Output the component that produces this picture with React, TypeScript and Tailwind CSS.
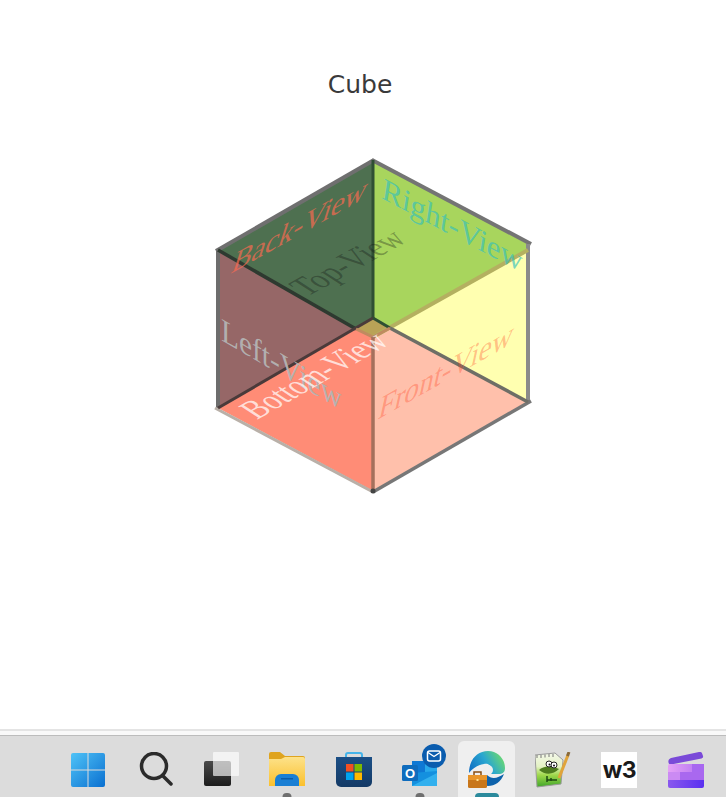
const faces = [
  { points: '373,160 528,244 528,250 390,328 373,318', fill: '#a8d55d' },
  { points: '373,160 218,250 356,329 373,318', fill: '#4e7050' },
  { points: '218,250 218,408 356,329', fill: '#966767' },
  { points: '528,250 528,402 390,328', fill: '#ffffb0' },
  { points: '218,408 373,491 373,337 356,329', fill: '#ff8c76' },
  { points: '528,402 373,491 373,337 390,328', fill: '#ffc0ab' },
  { points: '373,318 356,329 373,337 390,328', fill: '#b9a257' },
];

// each edge has its own tone in the picture because the faces blend under it
const edges = [
  { d: 'M374 160L216 251', stroke: '#6f6f6f', width: 4 },
  { d: 'M372 160L531 244', stroke: '#747474', width: 4 },
  { d: 'M218 250V408', stroke: '#6d6d6d', width: 4 },
  { d: 'M528 244V402', stroke: '#8a8a8a', width: 4 },
  { d: 'M215 408L373 492', stroke: '#b9b0a8', width: 3 },
  { d: 'M531 401L373 492', stroke: '#777', width: 3.5 },
  { d: 'M528 250L373 337', stroke: '#b4b060', width: 4 },
  { d: 'M373 160V318', stroke: '#2f4f33', width: 3 },
  { d: 'M218 250L356 329', stroke: '#2e3a30', width: 3.5 },
  { d: 'M218 408L373 318', stroke: '#4a3a3a', width: 3 },
  { d: 'M373 318L390 328', stroke: '#2f4f33', width: 3 },
  { d: 'M390 328L528 402', stroke: '#6e6e66', width: 3.5 },
  { d: 'M356 329L373 337L390 328', stroke: '#c08a60', width: 3 },
  { d: 'M373 337V491', stroke: '#a5705c', width: 3.5 },
];

const labels = [
  { text: 'Back-View', matrix: 'matrix(0.99 -0.56 -0.35 1.1 230 274)', fill: '#ff6a50', opacity: 0.7 },
  { text: 'Right-View', matrix: 'matrix(1 0.53 -0.15 1 381 198)', fill: '#30c0c0', opacity: 0.65 },
  { text: 'Top-View', matrix: 'matrix(0.85 -0.47 1 0.65 307 297)', fill: '#111', opacity: 0.33 },
  { text: 'Left-View', matrix: 'matrix(0.98 0.57 0 1.1 221 340)', fill: '#b4b4b4', opacity: 0.95 },
  { text: 'Bottom-View', matrix: 'matrix(0.82 -0.47 1 0.65 257 420)', fill: '#ffffff', opacity: 0.72 },
  { text: 'Front-View', matrix: 'matrix(0.97 -0.55 -0.25 1.15 377 420)', fill: '#ff4020', opacity: 0.33 },
];

function Cube() {
  return (
    <svg viewBox="213 155 325 345" width="325" height="345" className="block ml-[213px] mt-[55px]">
      {faces.map((f) => (
        <polygon key={f.points} points={f.points} fill={f.fill} />
      ))}
      {edges.map((e) => (
        <path key={e.d} d={e.d} fill="none" stroke={e.stroke} strokeWidth={e.width} />
      ))}
      {labels.map((l) => (
        <text key={l.text} transform={l.matrix} fill={l.fill} fillOpacity={l.opacity} fontFamily="'Liberation Serif', serif" fontSize="30">
          {l.text}
        </text>
      ))}
      <circle cx="373" cy="491" r="2.5" fill="#444" />
    </svg>
  );
}

function WinIcon() {
  return (
    <svg viewBox="0 0 36 36" className="w-9 h-9">
      <defs>
        <linearGradient id="win" x1="0" y1="0" x2="1" y2="1">
          <stop offset="0" stopColor="#4fc3f7" />
          <stop offset="1" stopColor="#0a6fd0" />
        </linearGradient>
      </defs>
      <path d="M3 1H17.5V17.5H1V3a2 2 0 0 1 2-2ZM18.5 1H33a2 2 0 0 1 2 2V17.5H18.5ZM1 18.5H17.5V35H3a2 2 0 0 1-2-2ZM18.5 18.5H35V33a2 2 0 0 1-2 2H18.5Z" fill="url(#win)" />
    </svg>
  );
}

function SearchIcon() {
  return (
    <svg viewBox="0 0 36 36" className="w-9 h-9">
      <circle cx="17" cy="14" r="12.5" fill="none" stroke="#2b2b2b" strokeWidth="3.5" />
      <path d="M26 24L34 32" stroke="#2b2b2b" strokeWidth="3.5" strokeLinecap="round" />
    </svg>
  );
}

function TaskViewIcon() {
  return (
    <svg viewBox="0 0 36 36" className="w-9 h-9">
      <defs>
        <linearGradient id="tv" x1="0" y1="0" x2="0" y2="1">
          <stop offset="0" stopColor="#4a4a4a" />
          <stop offset="1" stopColor="#1c1c1c" />
        </linearGradient>
      </defs>
      <rect x="1" y="9" width="27" height="25" rx="2" fill="url(#tv)" />
      <rect x="10" y="0" width="26" height="24" rx="1" fill="#fff" fillOpacity="0.65" />
    </svg>
  );
}

function FolderIcon() {
  return (
    <svg viewBox="0 0 36 36" className="w-9 h-9">
      <defs>
        <linearGradient id="fold" x1="0" y1="0" x2="0" y2="1">
          <stop offset="0" stopColor="#fde28a" />
          <stop offset="1" stopColor="#fbc02d" />
        </linearGradient>
      </defs>
      <path d="M0 2a2 2 0 0 1 2-2H11L16 4H34a2 2 0 0 1 2 2V10H0Z" fill="#dfa41f" />
      <path d="M0 7H12L16 5H34a2 2 0 0 1 2 2V34H0Z" fill="url(#fold)" />
      <path d="M6 34V28a6 6 0 0 1 6-6H24a6 6 0 0 1 6 6V34Z" fill="#1a7fd4" />
      <rect x="12" y="26" width="12" height="1.5" fill="#0b5ca8" />
    </svg>
  );
}

function StoreIcon() {
  return (
    <svg viewBox="0 0 36 36" className="w-9 h-9">
      <defs>
        <linearGradient id="store" x1="0" y1="0" x2="0" y2="1">
          <stop offset="0" stopColor="#1b4f86" />
          <stop offset="1" stopColor="#143a66" />
        </linearGradient>
      </defs>
      <path d="M10 6V3a2 2 0 0 1 2-2H24a2 2 0 0 1 2 2V6" fill="none" stroke="#45b4ea" strokeWidth="2" />
      <path d="M0 5H36V30a5 5 0 0 1-5 5H5a5 5 0 0 1-5-5Z" fill="url(#store)" />
      <rect x="10" y="12" width="7.5" height="7.5" fill="#f25022" />
      <rect x="18.5" y="12" width="7.5" height="7.5" fill="#7fba00" />
      <rect x="10" y="20.5" width="7.5" height="7.5" fill="#00a4ef" />
      <rect x="18.5" y="20.5" width="7.5" height="7.5" fill="#ffb900" />
    </svg>
  );
}

function OutlookIcon() {
  return (
    <svg viewBox="0 0 36 36" className="w-9 h-9 overflow-visible">
      <rect x="10" y="9" width="25" height="25" rx="1" fill="#28a8ea" />
      <rect x="10" y="9" width="13" height="12" fill="#0f78d4" />
      <path d="M10 21L35 19V34H10Z" fill="#1490df" />
      <path d="M10 34L35 21V34Z" fill="#32b0ee" />
      <rect x="0" y="13" width="16" height="16" rx="1.5" fill="#0f6cbd" />
      <text x="8" y="26" textAnchor="middle" fontFamily="'Liberation Sans', sans-serif" fontWeight="700" fontSize="13" fill="#fff">O</text>
      <circle cx="32" cy="4" r="12" fill="#0a5cae" />
      <rect x="25.5" y="-1" width="13" height="10" rx="2" fill="none" stroke="#fff" strokeWidth="1.5" />
      <path d="M26 0.5L32 4.5L38 0.5" fill="none" stroke="#fff" strokeWidth="1.4" />
    </svg>
  );
}

function EdgeIcon() {
  return (
    <svg viewBox="0 0 38 38" className="w-[38px] h-[38px] -mt-px">
      <defs>
        <linearGradient id="edge" x1="0" y1="0.7" x2="1" y2="0.3">
          <stop offset="0" stopColor="#1171c4" />
          <stop offset="0.5" stopColor="#2aa7d0" />
          <stop offset="1" stopColor="#6fdc6a" />
        </linearGradient>
      </defs>
      <path d="M1 22C1 9 9 0 20 0C30 0 37 8 37 17C37 21 35 23 30 23H22C25 14 20 12 16 13C9 14 4 18 1 22Z" fill="url(#edge)" />
      <circle cx="20" cy="19" r="5" fill="#eeeeee" />
      <path d="M19 24C24 29 30 27 36 23C33 31 27 35 20 35C17 35 16 31 19 24Z" fill="#0d62ab" />
      <rect x="0" y="24" width="19" height="13" rx="1.5" fill="#c8761a" />
      <rect x="0" y="24" width="19" height="5" fill="#e8952a" />
      <path d="M6 24V21H13V24" fill="none" stroke="#8a4f12" strokeWidth="1.5" />
      <rect x="8.5" y="28" width="2" height="2" fill="#ffe08a" />
    </svg>
  );
}

function NotepadIcon() {
  return (
    <svg viewBox="0 0 36 36" className="w-9 h-9">
      <defs>
        <linearGradient id="np" x1="0" y1="0" x2="0" y2="1">
          <stop offset="0" stopColor="#f4f8ea" />
          <stop offset="0.4" stopColor="#e4f2c4" />
          <stop offset="0.65" stopColor="#9fd84a" />
          <stop offset="1" stopColor="#3fa52a" />
        </linearGradient>
      </defs>
      <path d="M0 3L20 1L28 8L26 32L2 35Z" fill="url(#np)" stroke="#9a9a9a" strokeWidth="1" />
      <path d="M2 3V6M6 3V6M10 2.5V5.5M14 2V5M18 2V5" stroke="#777" strokeWidth="1" />
      <path d="M4 18C8 14 16 13 24 17C18 23 10 23 4 18Z" fill="#4e7d1e" />
      <circle cx="14" cy="12" r="3" fill="#fff" stroke="#222" strokeWidth="1" />
      <circle cx="19" cy="13" r="3" fill="#fff" stroke="#222" strokeWidth="1" />
      <circle cx="14.5" cy="12.5" r="1" fill="#111" />
      <circle cx="19" cy="13.5" r="1" fill="#111" />
      <path d="M12 24V30M12 28H22M16 26V29" stroke="#1d4a12" strokeWidth="1.5" fill="none" />
      <path d="M24 26L33 3" stroke="#e0a43a" strokeWidth="3" />
      <path d="M32.5 4L34 0" stroke="#8a6a3a" strokeWidth="3" />
    </svg>
  );
}

function ClapperIcon() {
  return (
    <svg viewBox="0 0 36 36" className="w-9 h-9">
      <defs>
        <linearGradient id="clapt" x1="0" y1="0" x2="1" y2="0">
          <stop offset="0" stopColor="#e6a2f6" />
          <stop offset="1" stopColor="#b06ff2" />
        </linearGradient>
        <linearGradient id="clapb" x1="0" y1="0" x2="1" y2="0">
          <stop offset="0" stopColor="#8a58ee" />
          <stop offset="1" stopColor="#5a30f0" />
        </linearGradient>
      </defs>
      <path d="M3 6L31 0a3 3 0 0 1 3.5 2.5L35 4a2 2 0 0 1-1.5 2.5L3 12.5C0 13 -1 7.5 3 6Z" fill="#7a4ad8" />
      <path d="M0 14a2 2 0 0 1 2-2H34a2 2 0 0 1 2 2V20H0Z" fill="url(#clapt)" />
      <rect x="24" y="12" width="12" height="8" fill="#a868f0" />
      <rect x="0" y="20" width="36" height="8" fill="#cb8af3" />
      <rect x="12" y="20" width="24" height="8" fill="#a968ef" />
      <path d="M0 28H36V34a2 2 0 0 1-2 2H2a2 2 0 0 1-2-2Z" fill="url(#clapb)" />
    </svg>
  );
}

const items = [
  { id: 'win', icon: <WinIcon /> },
  { id: 'search', icon: <SearchIcon /> },
  { id: 'tasks', icon: <TaskViewIcon /> },
  { id: 'files', icon: <FolderIcon />, dot: true },
  { id: 'store', icon: <StoreIcon /> },
  { id: 'mail', icon: <OutlookIcon />, dot: true },
  { id: 'edge', icon: <EdgeIcon />, active: true },
  { id: 'npp', icon: <NotepadIcon /> },
  {
    id: 'w3',
    icon: (
      <div className="w-9 h-9 bg-white flex items-center justify-center text-[23px] font-bold tracking-tight text-[#1a1a1a] font-['Inter',sans-serif]">
        w3
      </div>
    ),
  },
  { id: 'clap', icon: <ClapperIcon /> },
];

export default function App() {
  return (
    <div className="h-[797px] w-[726px] bg-white flex flex-col overflow-hidden">
      <main className="h-[729px] pt-[70px]">
        <h1 className="w-[720px] text-center text-[25px] leading-[30px] text-[#3a3a3a] font-['DejaVu_Sans',sans-serif]">Cube</h1>
        <Cube />
      </main>

      <div className="h-[2px] bg-[#e4e4e4]" />
      <div className="h-[4px] bg-[#f9f9f9]" />
      <div className="h-[1px] bg-[#bcbcbc]" />

      <footer className="flex-1 bg-[#dcdcdc] flex pl-[55px] pt-[5px]">
        {items.map((item) => (
          <div
            key={item.id}
            className={`relative flex justify-center pt-[11px] ${item.active ? 'rounded-t-md bg-[#efefef] mx-[5px] w-[56.4px]' : 'w-[66.4px]'}`}
          >
            {item.icon}
            {item.dot && <span className="absolute bottom-0 left-1/2 -translate-x-1/2 w-[9px] h-[4px] rounded-t-full bg-[#6f6f6f]" />}
            {item.active && <span className="absolute bottom-0 left-1/2 -translate-x-1/2 w-[24px] h-[4px] rounded-t-sm bg-[#2b8a9c]" />}
          </div>
        ))}
      </footer>
    </div>
  );
}
